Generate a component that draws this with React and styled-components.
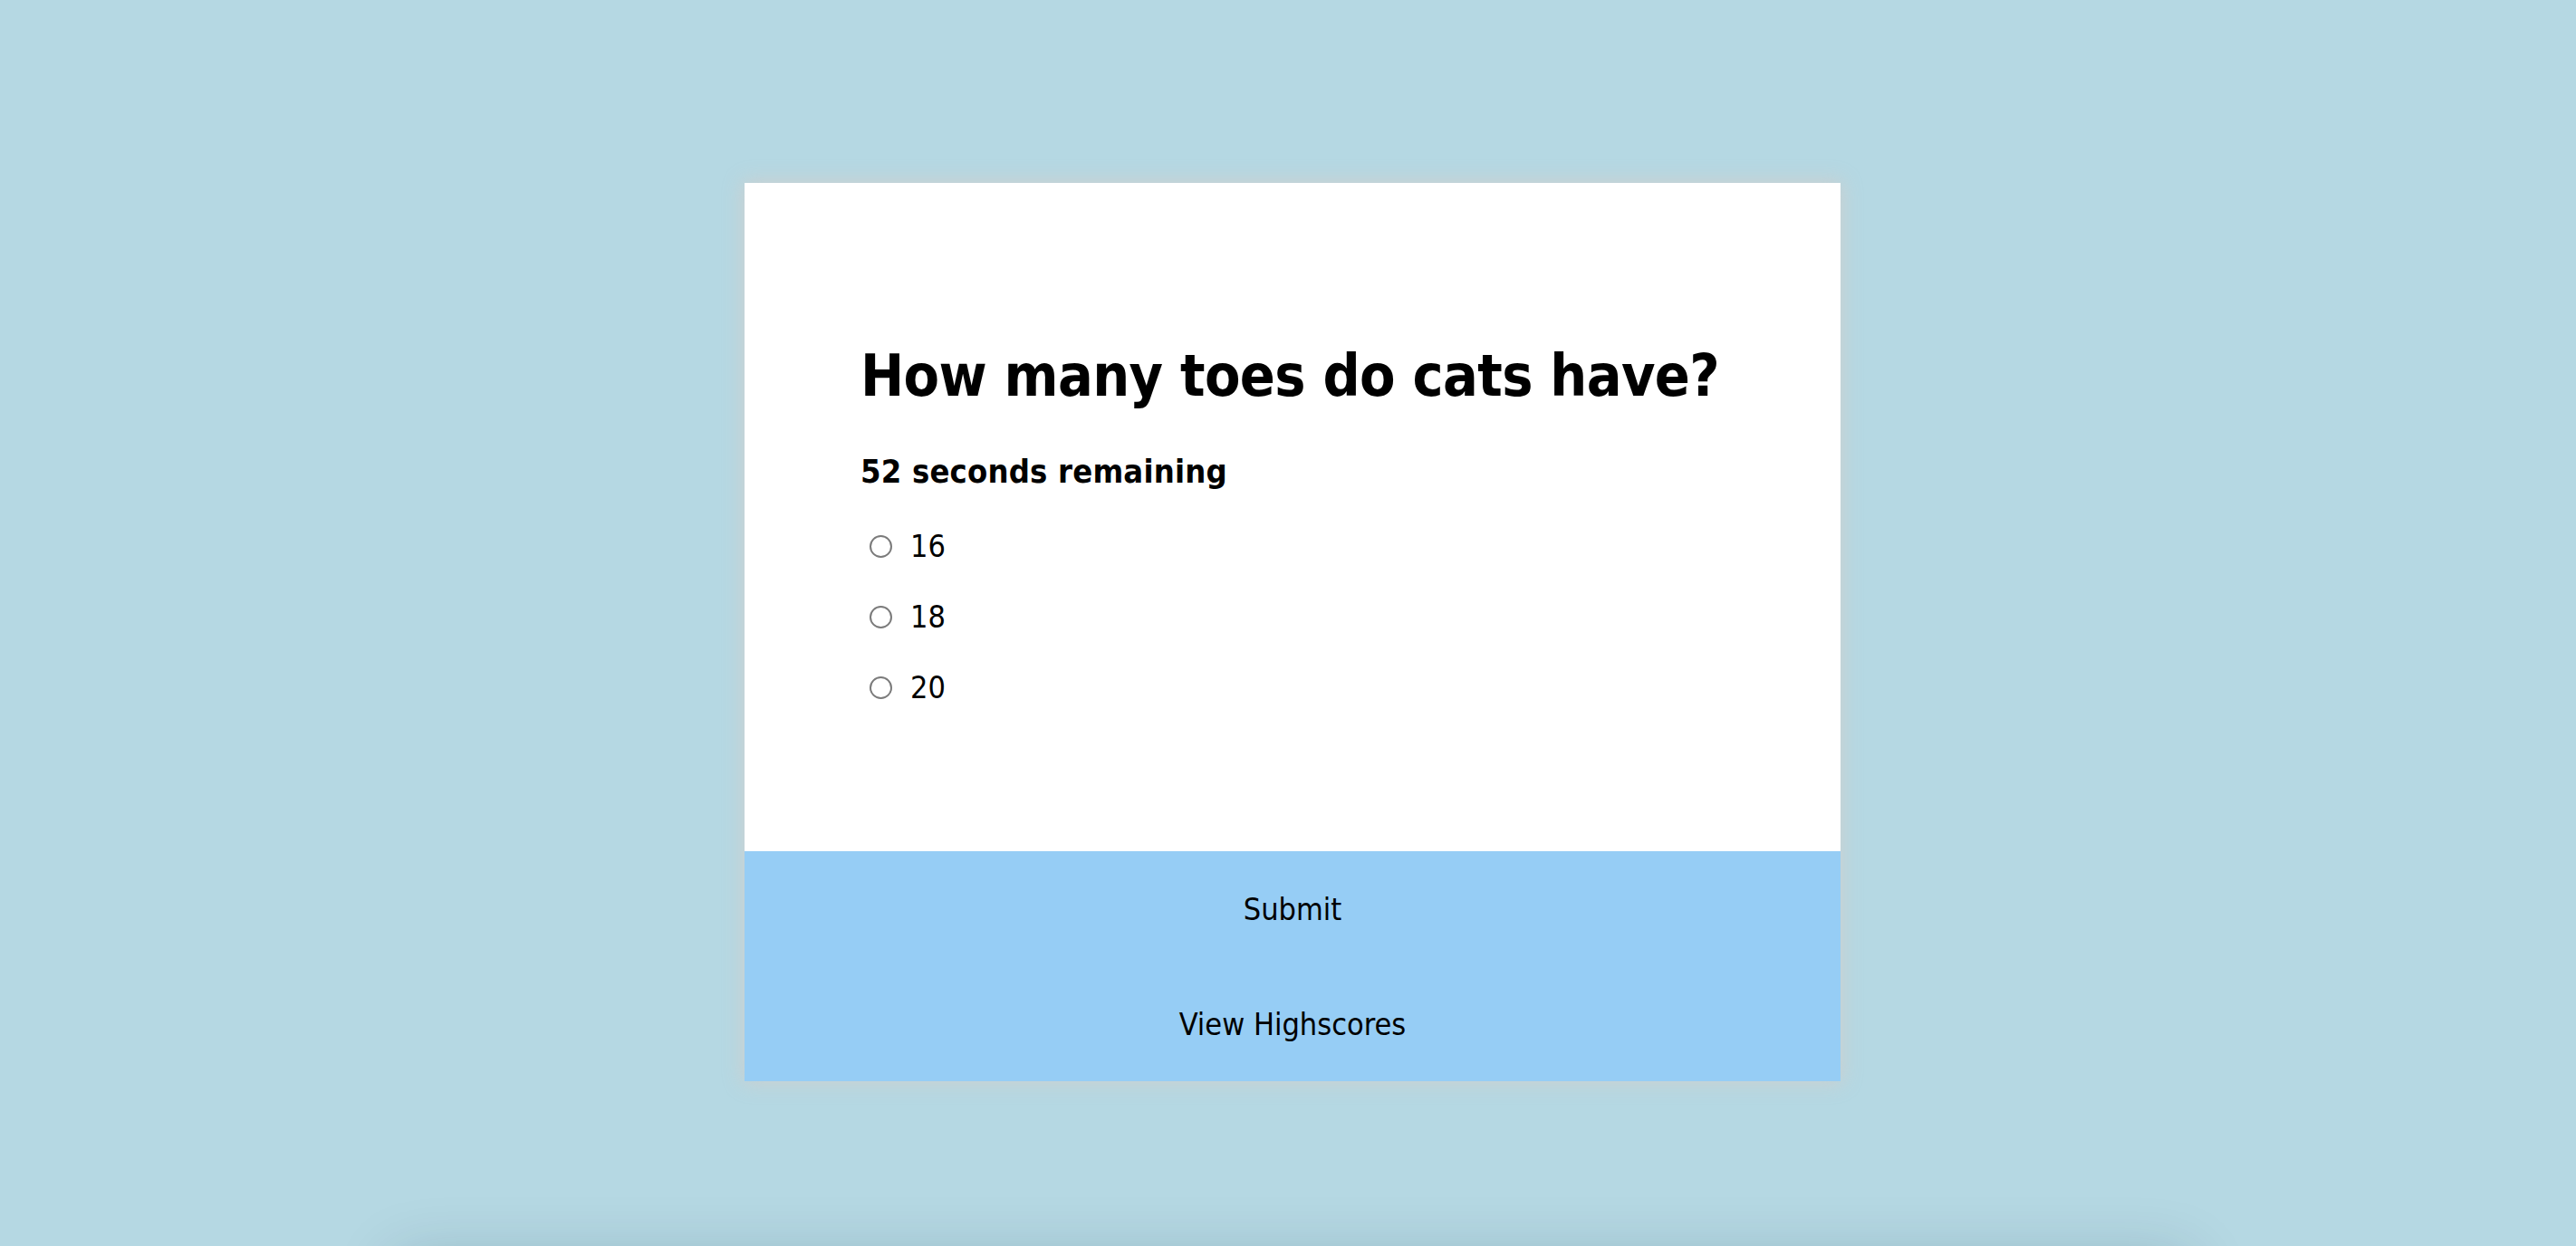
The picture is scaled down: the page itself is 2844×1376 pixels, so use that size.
import styled, { createGlobalStyle } from 'styled-components';

const GlobalStyle = createGlobalStyle`
  html, body {
    margin: 0;
    padding: 0;
    overflow: hidden;
    background: #b5d8e3;
    font-family: "DejaVu Sans Condensed", "DejaVu Sans", sans-serif;
    font-stretch: condensed;
    color: #000;
  }
`;

const Page = styled.div`
  display: flex;
  flex-direction: column;
  align-items: center;
  padding: 202px 0 0 10px;
  height: 1376px;
  box-sizing: border-box;
`;

const Card = styled.div`
  width: 1210px;
  flex-shrink: 0;
  background: #fff;
  box-shadow: 0 0 20px 2px rgba(212, 204, 200, 0.75);
  display: flex;
  flex-direction: column;
`;

const Question = styled.div`
  padding: 175px 128px 142px;
`;

const Title = styled.h1`
  margin: 0;
  font-size: 64px;
  line-height: 76px;
  font-weight: bold;
  white-space: nowrap;
  letter-spacing: -0.6px;
`;

const Timer = styled.h4`
  margin: 48px 0 23px;
  font-size: 36px;
  line-height: 40px;
  font-weight: bold;
  letter-spacing: 0.2px;
`;

const Choice = styled.label`
  display: flex;
  align-items: center;
  gap: 20px;
  height: 78px;
  padding-left: 10px;
  font-size: 34px;
`;

const Radio = styled.input`
  appearance: none;
  margin: 0;
  width: 25px;
  height: 25px;
  border: 2px solid #7b7b7b;
  border-radius: 50%;
  box-sizing: border-box;
  background: #fff;
`;

const Actions = styled.div`
  background: #96cdf5;
  display: flex;
  flex-direction: column;
`;

const ActionButton = styled.button`
  height: 127px;
  border: 0;
  background: transparent;
  font-family: inherit;
  font-stretch: condensed;
  font-size: 34px;
  color: #000;
  cursor: pointer;
`;

const Footer = styled.div`
  margin-top: 196px;
  width: 1980px;
  height: 200px;
  flex-shrink: 0;
  background: #b5d8e3;
  box-shadow: 0 0 70px rgba(0, 40, 60, 0.2);
`;

const choices = ['16', '18', '20'];

const App = () => (
  <>
    <GlobalStyle />
    <Page>
      <Card>
        <Question>
          <Title>How many toes do cats have?</Title>
          <Timer>52 seconds remaining</Timer>
          {choices.map((c) => (
            <Choice key={c}>
              <Radio type="radio" name="answer" value={c} />
              {c}
            </Choice>
          ))}
        </Question>
        <Actions>
          <ActionButton>Submit</ActionButton>
          <ActionButton>View Highscores</ActionButton>
        </Actions>
      </Card>
      <Footer />
    </Page>
  </>
);

export default App;
